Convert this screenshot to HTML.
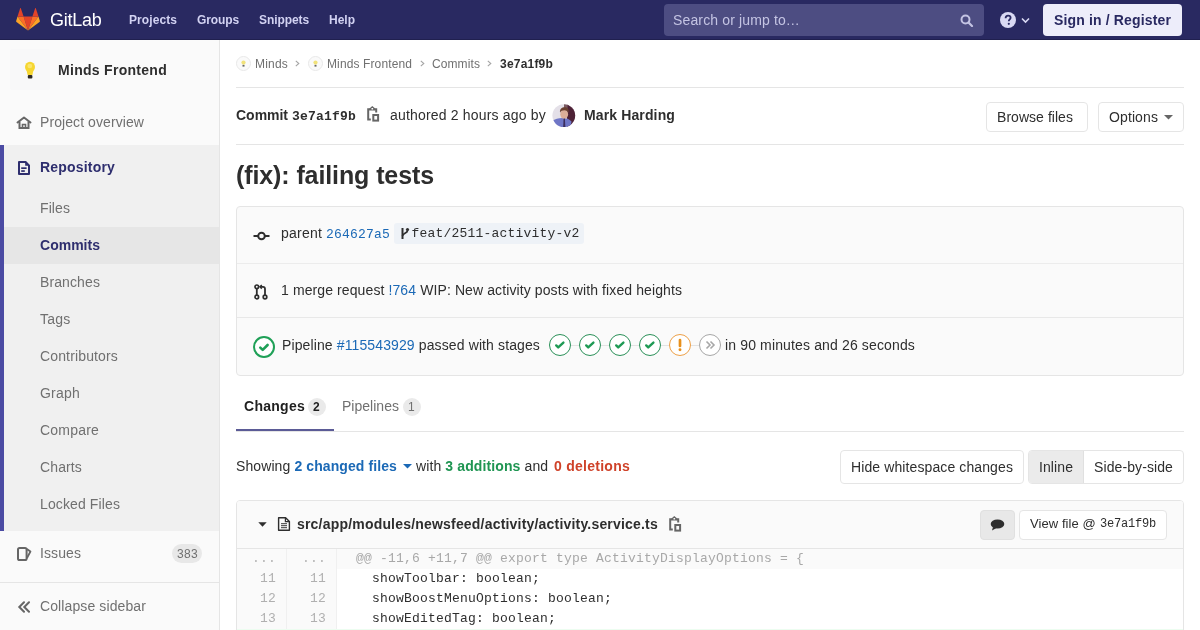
<!DOCTYPE html>
<html><head><meta charset="utf-8">
<style>
*{box-sizing:border-box;margin:0;padding:0}
html,body{width:1200px;height:630px;overflow:hidden;background:#fff}
body{font-family:"Liberation Sans",sans-serif;font-size:14px;color:#2e2e2e;position:relative}
.a{position:absolute;white-space:nowrap;line-height:1}
.m{font-family:"Liberation Mono",monospace}
.b{font-weight:bold}
.box{position:absolute}
/* navbar */
#nav{position:absolute;left:0;top:0;width:1200px;height:40px;background:#292961;border-bottom:1px solid #20204f}
.nt{font-weight:bold;font-size:12px;color:#d2d2f2;top:14px}
/* sidebar */
#side{position:absolute;left:0;top:40px;width:220px;height:590px;background:#fafafa;border-right:1px solid #e5e5e5}
.si{left:40px;font-size:14px;color:#707070}
.link{color:#1b69b6}
.hr{position:absolute;left:236px;width:948px;height:1px;background:#e5e5e5}
.btn{position:absolute;border:1px solid #e5e5e5;border-radius:4px;background:#fff}
.stage{position:absolute;top:334px;width:22px;height:22px;border-radius:50%;border:1px solid #2a9058;background:#fff}
.stage svg{position:absolute;left:0;top:0}
.ln{position:absolute;width:50px;text-align:right;font-family:"Liberation Mono",monospace;font-size:13px;letter-spacing:0.2px;line-height:1;color:#b0b0b0}
.code{position:absolute;left:356px;font-family:"Liberation Mono",monospace;font-size:13px;letter-spacing:0.2px;line-height:1;color:#2e2e2e;white-space:pre}
</style></head>
<body>
<div id="root" style="position:absolute;left:0;top:0;width:1200px;height:630px;will-change:transform;overflow:hidden">
<!-- ================= NAVBAR ================= -->
<div id="nav">
  <svg class="box" style="left:16px;top:8px" width="24" height="23" viewBox="0 0 24 23">
    <path d="M12 22.6 L16.4 8.4 H7.6 Z" fill="#e24329"/>
    <path d="M12 22.6 L7.6 8.4 H1.5 Z" fill="#fc6d26"/>
    <path d="M1.5 8.4 L0.1 12.9 C0 13.3 0.1 13.7 0.5 14 L12 22.6 Z" fill="#fca326"/>
    <path d="M1.5 8.4 H7.6 L4.9 0.4 C4.7 -0.1 4.3 -0.1 4.1 0.4 Z" fill="#e24329"/>
    <path d="M12 22.6 L16.4 8.4 H22.5 Z" fill="#fc6d26"/>
    <path d="M22.5 8.4 L23.9 12.9 C24 13.3 23.9 13.7 23.5 14 L12 22.6 Z" fill="#fca326"/>
    <path d="M22.5 8.4 H16.4 L19.1 0.4 C19.3 -0.1 19.7 -0.1 19.9 0.4 Z" fill="#e24329"/>
  </svg>
  <div class="a nols" style="left:50px;top:11px;font-size:18px;color:#fff;letter-spacing:-0.25px">GitLab</div>
  <div class="a nt" style="left:129px;letter-spacing:0.081px">Projects</div>
  <div class="a nt" style="left:197px;letter-spacing:-0.111px">Groups</div>
  <div class="a nt" style="left:259px;letter-spacing:-0.084px">Snippets</div>
  <div class="a nt" style="left:329px;letter-spacing:-0.001px">Help</div>
  <div class="box" style="left:664px;top:4px;width:320px;height:32px;border-radius:4px;background:#4d4d82"></div>
  <div class="a" style="left:673px;top:13px;font-size:14px;color:#c4c4e3;letter-spacing:0.139px">Search or jump to…</div>
  <svg class="box" style="left:960px;top:14px" width="14" height="13" viewBox="0 0 14 13">
    <circle cx="5.5" cy="5.5" r="4" fill="none" stroke="#c4c4e3" stroke-width="2"/>
    <path d="M8.5 8.5 L12 12" stroke="#c4c4e3" stroke-width="2.2" stroke-linecap="round"/>
  </svg>
  <svg class="box" style="left:1000px;top:12px" width="32" height="16" viewBox="0 0 32 16">
    <circle cx="8" cy="8" r="8" fill="#d9d9f3"/>
    <path d="M5.6 6.2 C5.6 4.6 6.7 3.6 8.1 3.6 C9.6 3.6 10.6 4.6 10.6 5.8 C10.6 7.4 8.8 7.5 8.8 9.2" fill="none" stroke="#292961" stroke-width="1.8"/>
    <circle cx="8.8" cy="11.8" r="1.1" fill="#292961"/>
    <path d="M22 6.5 L25.5 10 L29 6.5" fill="none" stroke="#d9d9f3" stroke-width="1.6"/>
  </svg>
  <div class="box" style="left:1043px;top:4px;width:139px;height:32px;border-radius:4px;background:#ededfa"></div>
  <div class="a b" style="left:1054px;top:13px;font-size:14px;color:#292961;letter-spacing:0.147px">Sign in / Register</div>
</div>

<!-- ================= SIDEBAR ================= -->
<div id="side"></div>
<div class="box" style="left:10px;top:49px;width:40px;height:41px;background:#f8f8f9;border-radius:3px"></div>
<svg class="box" style="left:23px;top:60px" width="14" height="20" viewBox="0 0 14 20">
  <ellipse cx="7" cy="7" rx="5" ry="5.2" fill="#f6d631"/>
  <path d="M3.6 10.5 L10.4 10.5 L9.4 15 L4.6 15 Z" fill="#f6d631"/>
  <ellipse cx="6.8" cy="6" rx="2.4" ry="2.2" fill="#fae56c"/>
  <rect x="4.8" y="15" width="4.6" height="3.6" rx="1" fill="#2e2a22"/>
</svg>
<div class="a b" style="left:58px;top:63px;font-size:14px;color:#2e2e2e;letter-spacing:0.287px">Minds Frontend</div>

<svg class="box" style="left:16px;top:116px" width="16" height="13" viewBox="0 0 16 13">
  <path d="M1.5 6.5 L8 1.5 L14.5 6.5" fill="none" stroke="#666" stroke-width="2" stroke-linejoin="round" stroke-linecap="round"/>
  <path d="M3.5 5.5 V12 H12.5 V5.5" fill="none" stroke="#666" stroke-width="2"/>
  <path d="M6.5 12 V8.5 H9.5 V12" fill="none" stroke="#666" stroke-width="1.6"/>
</svg>
<div class="a si" style="top:115px;letter-spacing:0.081px">Project overview</div>

<div class="box" style="left:0;top:145px;width:219px;height:386px;background:#f0f0f0"></div>
<div class="box" style="left:0;top:145px;width:4px;height:386px;background:#4b4ba3"></div>
<div class="box" style="left:4px;top:227px;width:215px;height:37px;background:#e6e6e6"></div>
<svg class="box" style="left:18px;top:161px" width="12" height="14" viewBox="0 0 12 14">
  <path d="M1 1 H7.6 L11 4.4 V13 H1 Z" fill="none" stroke="#2e2e6e" stroke-width="2" stroke-linejoin="round"/>
  <path d="M7.2 0.5 L11.5 4.8 H7.2 Z" fill="#2e2e6e"/>
  <rect x="3.2" y="6.3" width="5.4" height="1.7" fill="#2e2e6e"/>
  <rect x="3.2" y="9.2" width="3.6" height="1.7" fill="#2e2e6e"/>
</svg>
<div class="a si b" style="top:160px;color:#2e2e6e;letter-spacing:0.188px">Repository</div>
<div class="a si" style="top:201px;letter-spacing:0.088px">Files</div>
<div class="a si b" style="top:238px;color:#2e2e6e;letter-spacing:0.015px">Commits</div>
<div class="a si" style="top:275px;letter-spacing:0.107px">Branches</div>
<div class="a si" style="top:312px;letter-spacing:0.219px">Tags</div>
<div class="a si" style="top:349px;letter-spacing:0.145px">Contributors</div>
<div class="a si" style="top:386px;letter-spacing:0.218px">Graph</div>
<div class="a si" style="top:423px;letter-spacing:0.203px">Compare</div>
<div class="a si" style="top:460px;letter-spacing:0.128px">Charts</div>
<div class="a si" style="top:497px;letter-spacing:0.117px">Locked Files</div>

<svg class="box" style="left:17px;top:547px" width="15" height="14" viewBox="0 0 15 14">
  <rect x="1" y="1" width="8.6" height="12" rx="1.6" fill="none" stroke="#666" stroke-width="2"/>
  <path d="M9.8 2 L13.4 4.6 L9.8 11.2" fill="none" stroke="#666" stroke-width="1.9" stroke-linejoin="round"/>
</svg>
<div class="a si" style="top:546px;letter-spacing:0.090px">Issues</div>
<div class="box" style="left:172px;top:544px;width:30px;height:19px;border-radius:10px;background:#e8e8e8"></div>
<div class="a" style="left:177px;top:548px;font-size:12px;color:#707070;letter-spacing:0.326px">383</div>
<div class="box" style="left:0;top:582px;width:219px;height:1px;background:#e5e5e5"></div>
<svg class="box" style="left:17px;top:601px" width="14" height="12" viewBox="0 0 14 12">
  <path d="M7 1.3 L2.3 6 L7 10.7 M12 1.3 L7.3 6 L12 10.7" fill="none" stroke="#666" stroke-width="2" stroke-linecap="round"/>
</svg>
<div class="a si" style="top:599px;letter-spacing:0.107px">Collapse sidebar</div>

<!-- ================= BREADCRUMBS ================= -->
<svg class="box" style="left:236px;top:56px" width="15" height="15" viewBox="0 0 15 15">
  <circle cx="7.5" cy="7.5" r="7" fill="#fafafa" stroke="#e8e8e8" stroke-width="1"/>
  <circle cx="7.5" cy="6.6" r="2.1" fill="#f1e27a"/>
  <rect x="6.5" y="8.9" width="2" height="1.7" fill="#666"/>
</svg>
<div class="a" style="left:255px;top:58px;font-size:12px;color:#707070;letter-spacing:0.198px">Minds</div>
<svg class="box" style="left:295px;top:60px" width="5" height="7" viewBox="0 0 5 7"><path d="M0.8 0.8 L3.8 3.5 L0.8 6.2" fill="none" stroke="#a5a5a5" stroke-width="1.1"/></svg>
<svg class="box" style="left:308px;top:56px" width="15" height="15" viewBox="0 0 15 15">
  <circle cx="7.5" cy="7.5" r="7" fill="#fafafa" stroke="#e8e8e8" stroke-width="1"/>
  <circle cx="7.5" cy="6.6" r="2.1" fill="#f1e27a"/>
  <rect x="6.5" y="8.9" width="2" height="1.7" fill="#666"/>
</svg>
<div class="a" style="left:327px;top:58px;font-size:12px;color:#707070;letter-spacing:0.116px">Minds Frontend</div>
<svg class="box" style="left:420px;top:60px" width="5" height="7" viewBox="0 0 5 7"><path d="M0.8 0.8 L3.8 3.5 L0.8 6.2" fill="none" stroke="#a5a5a5" stroke-width="1.1"/></svg>
<div class="a" style="left:432px;top:58px;font-size:12px;color:#707070;letter-spacing:0.095px">Commits</div>
<svg class="box" style="left:487px;top:60px" width="5" height="7" viewBox="0 0 5 7"><path d="M0.8 0.8 L3.8 3.5 L0.8 6.2" fill="none" stroke="#a5a5a5" stroke-width="1.1"/></svg>
<div class="a b" style="left:500px;top:58px;font-size:12px;color:#2e2e2e;letter-spacing:0.204px">3e7a1f9b</div>
<div class="hr" style="top:87px"></div>

<!-- ================= COMMIT HEADER ================= -->
<div class="a b" style="left:236px;top:108px;font-size:14px;letter-spacing:-0.018px">Commit</div>
<div class="a m b" style="left:292px;top:110px;font-size:13px;letter-spacing:0.199px">3e7a1f9b</div>
<svg class="box" style="left:366px;top:106px" width="14" height="16" viewBox="0 0 14 16">
  <path d="M4 3.2 H2.2 V13.4 H4.8" fill="none" stroke="#666" stroke-width="2"/>
  <path d="M8.6 3.2 H10.2 V6.6" fill="none" stroke="#666" stroke-width="2"/>
  <path d="M3.4 4.6 V2.5 L6.3 0.1 L9.2 2.5 V4.6 Z" fill="#666"/>
  <rect x="5.5" y="2" width="1.6" height="1.5" fill="#fff"/>
  <rect x="7.3" y="9" width="4.8" height="5.6" fill="none" stroke="#666" stroke-width="2"/>
</svg>
<div class="a" style="left:390px;top:108px;font-size:14px;letter-spacing:0.184px">authored 2 hours ago by</div>
<svg class="box" style="left:552px;top:104px" width="24" height="24" viewBox="0 0 24 24">
  <defs><clipPath id="av"><circle cx="11.8" cy="11.6" r="11.4"/></clipPath></defs>
  <g clip-path="url(#av)">
    <rect width="24" height="24" fill="#e4e0e8"/>
    <path d="M15 0 H24 V24 H15 Z" fill="#4e2236"/>
    <path d="M12 0 H16 C15 4 15.5 8 16 12 H12 Z" fill="#7a5a62"/>
    <path d="M-1 24 V18 C2 15.5 6 14 10.5 14 C14.5 14 17.5 15 19.5 17.5 L18.5 24 Z" fill="#6f76c6"/>
    <ellipse cx="12.2" cy="10.2" rx="3.9" ry="4.7" fill="#dcae98"/>
    <path d="M8 8.8 C7.6 4.8 10 3.2 12.6 3.2 C15.6 3.2 17.2 5.2 16.6 9 C15.8 7 14.2 6.3 12.3 6.3 C10.4 6.3 9 7 8 8.8 Z" fill="#6a4030"/>
    <path d="M11.6 14.5 L12.9 14.5 L13.4 24 L11.1 24 Z" fill="#3c2e5e"/>
  </g>
</svg>
<div class="a b" style="left:584px;top:108px;font-size:14px;letter-spacing:0.128px">Mark Harding</div>

<div class="btn" style="left:986px;top:102px;width:102px;height:30px"></div>
<div class="a" style="left:997px;top:110px;font-size:14px;letter-spacing:0.044px">Browse files</div>
<div class="btn" style="left:1098px;top:102px;width:86px;height:30px"></div>
<div class="a" style="left:1109px;top:110px;font-size:14px;letter-spacing:0.107px">Options</div>
<svg class="box" style="left:1164px;top:115px" width="9" height="5" viewBox="0 0 9 5"><path d="M0 0 H9 L4.5 4.5 Z" fill="#666"/></svg>
<div class="hr" style="top:144px"></div>

<!-- ================= TITLE ================= -->
<div class="a b" style="left:236px;top:163px;font-size:25px;letter-spacing:-0.101px">(fix): failing tests</div>

<!-- ================= INFO WELL ================= -->
<div class="box" style="left:236px;top:206px;width:948px;height:170px;background:#fafafa;border:1px solid #e5e5e5;border-radius:4px"></div>
<div class="box" style="left:237px;top:263px;width:946px;height:1px;background:#ececec"></div>
<div class="box" style="left:237px;top:317px;width:946px;height:1px;background:#e8e8e8"></div>

<svg class="box" style="left:252.7px;top:229px" width="17" height="14" viewBox="0 0 17 14">
  <circle cx="8.5" cy="7" r="3.3" fill="none" stroke="#2e2e2e" stroke-width="2"/>
  <path d="M0.5 7 H5 M12 7 H16.5" stroke="#2e2e2e" stroke-width="2"/>
</svg>
<div class="a" style="left:281px;top:226px;font-size:14px;letter-spacing:0.217px">parent</div>
<div class="a m link" style="left:326px;top:228px;font-size:13px;letter-spacing:0.199px">264627a5</div>
<div class="box" style="left:394px;top:223px;width:190px;height:21px;background:#eef2f7;border-radius:3px"></div>
<svg class="box" style="left:400px;top:227px" width="10" height="13" viewBox="0 0 10 13">
  <path d="M2.5 1 V12" stroke="#2e2e2e" stroke-width="2"/>
  <circle cx="7.5" cy="2.5" r="1.6" fill="#2e2e2e"/>
  <path d="M7.5 3.5 C7.5 6.5 2.5 6 2.5 9" fill="none" stroke="#2e2e2e" stroke-width="1.8"/>
</svg>
<div class="a m" style="left:411.5px;top:227px;font-size:13px;letter-spacing:0.199px">feat/2511-activity-v2</div>

<svg class="box" style="left:254px;top:284px" width="14" height="16" viewBox="0 0 14 16">
  <circle cx="2.8" cy="2.8" r="1.8" fill="none" stroke="#2e2e2e" stroke-width="1.7"/>
  <circle cx="2.8" cy="13" r="1.8" fill="none" stroke="#2e2e2e" stroke-width="1.7"/>
  <circle cx="11" cy="13" r="1.8" fill="none" stroke="#2e2e2e" stroke-width="1.7"/>
  <path d="M2.8 4.6 V11.2" stroke="#2e2e2e" stroke-width="1.8"/>
  <path d="M11 11.2 V5 C11 3.6 10.3 2.8 9 2.8 H6.5" fill="none" stroke="#2e2e2e" stroke-width="1.8"/>
  <path d="M7.8 1 L6 2.8 L7.8 4.6" fill="none" stroke="#2e2e2e" stroke-width="1.5"/>
</svg>
<div class="a" style="left:281px;top:283px;font-size:14px;letter-spacing:0.103px">1 merge request <span class="link">!764</span> WIP: New activity posts with fixed heights</div>

<svg class="box" style="left:253px;top:336px" width="22" height="22" viewBox="0 0 22 22">
  <circle cx="11" cy="11" r="10" fill="#fff" stroke="#1fa057" stroke-width="2"/>
  <path d="M7.3 11.6 L9.7 13.9 L14.6 9" fill="none" stroke="#1fa057" stroke-width="2.6" stroke-linecap="round" stroke-linejoin="round"/>
</svg>
<div class="a" style="left:282px;top:338px;font-size:14px;letter-spacing:0.118px">Pipeline <span class="link">#115543929</span> passed with stages</div>

<div class="box" style="left:571px;top:345px;width:128px;height:1px;background:#e3e3e3"></div>
<div class="stage" style="left:549px"><svg width="20" height="20" viewBox="0 0 20 20"><path d="M6.2 10.4 L8.2 12.4 L13.4 7.6" fill="none" stroke="#1f9a55" stroke-width="2.4" stroke-linecap="round" stroke-linejoin="round"/></svg></div>
<div class="stage" style="left:579px"><svg width="20" height="20" viewBox="0 0 20 20"><path d="M6.2 10.4 L8.2 12.4 L13.4 7.6" fill="none" stroke="#1f9a55" stroke-width="2.4" stroke-linecap="round" stroke-linejoin="round"/></svg></div>
<div class="stage" style="left:609px"><svg width="20" height="20" viewBox="0 0 20 20"><path d="M6.2 10.4 L8.2 12.4 L13.4 7.6" fill="none" stroke="#1f9a55" stroke-width="2.4" stroke-linecap="round" stroke-linejoin="round"/></svg></div>
<div class="stage" style="left:639px"><svg width="20" height="20" viewBox="0 0 20 20"><path d="M6.2 10.4 L8.2 12.4 L13.4 7.6" fill="none" stroke="#1f9a55" stroke-width="2.4" stroke-linecap="round" stroke-linejoin="round"/></svg></div>
<div class="stage" style="left:669px;border-color:#eda048"><svg width="20" height="20" viewBox="0 0 20 20"><path d="M10 5 V11" stroke="#e8901c" stroke-width="2.7" stroke-linecap="round"/><circle cx="10" cy="14.8" r="1.45" fill="#e8901c"/></svg></div>
<div class="stage" style="left:699px;border-color:#a7a7a7"><svg width="20" height="20" viewBox="0 0 20 20"><path d="M6.5 6.5 L10 10 L6.5 13.5 M10.5 6.5 L14 10 L10.5 13.5" fill="none" stroke="#a7a7a7" stroke-width="1.6"/></svg></div>
<div class="a" style="left:725px;top:338px;font-size:14px;letter-spacing:0.142px">in 90 minutes and 26 seconds</div>

<!-- ================= TABS ================= -->
<div class="a b" style="left:244px;top:399px;font-size:14px;color:#1f1f1f;letter-spacing:0.268px">Changes</div>
<div class="box" style="left:308px;top:398px;width:18px;height:18px;border-radius:9px;background:#eaeaea"></div>
<div class="a b" style="left:313px;top:401px;font-size:12px;color:#1f1f1f;letter-spacing:0.326px">2</div>
<div class="a" style="left:342px;top:399px;font-size:14px;color:#707070;letter-spacing:0.021px">Pipelines</div>
<div class="box" style="left:403px;top:398px;width:18px;height:18px;border-radius:9px;background:#eaeaea"></div>
<div class="a" style="left:408px;top:401px;font-size:12px;color:#707070;letter-spacing:0.326px">1</div>
<div class="hr" style="top:431px"></div>
<div class="box" style="left:236px;top:429px;width:98px;height:2px;background:#5b5b96"></div>

<!-- ================= DIFF STATS ================= -->
<div class="a" style="left:236px;top:459px;font-size:14px;letter-spacing:0.097px">Showing <span class="b link">2 changed files</span></div>
<svg class="box" style="left:403px;top:464px" width="9" height="5" viewBox="0 0 9 5"><path d="M0 0 H9 L4.5 4.5 Z" fill="#1b69b6"/></svg>
<div class="a" style="left:416px;top:459px;font-size:14px;letter-spacing:0.112px">with <span class="b" style="color:#1f9552">3 additions</span> and</div>
<div class="a b" style="left:554px;top:459px;font-size:14px;color:#cf4229;letter-spacing:0.261px">0 deletions</div>

<div class="btn" style="left:840px;top:450px;width:184px;height:34px"></div>
<div class="a" style="left:851px;top:460px;font-size:14px;letter-spacing:0.107px">Hide whitespace changes</div>
<div class="btn" style="left:1028px;top:450px;width:156px;height:34px"></div>
<div class="box" style="left:1029px;top:451px;width:55px;height:32px;background:#ebebeb;border-right:1px solid #e0e0e0;border-radius:3px 0 0 3px"></div>
<div class="a" style="left:1039px;top:460px;font-size:14px;letter-spacing:0.089px">Inline</div>
<div class="a" style="left:1094px;top:460px;font-size:14px;letter-spacing:0.099px">Side-by-side</div>

<!-- ================= FILE ================= -->
<div class="box" style="left:236px;top:500px;width:948px;height:140px;border:1px solid #e5e5e5;border-radius:4px 4px 0 0;background:#fff"></div>
<div class="box" style="left:237px;top:501px;width:946px;height:47px;background:#fafafa;border-radius:3px 3px 0 0"></div>
<div class="box" style="left:237px;top:548px;width:946px;height:1px;background:#e5e5e5"></div>
<svg class="box" style="left:257.5px;top:521.5px" width="10" height="6" viewBox="0 0 10 6"><path d="M0.3 0.3 H8.7 L4.5 4.7 Z" fill="#2e2e2e"/></svg>
<svg class="box" style="left:277px;top:517px" width="14" height="15" viewBox="0 0 14 15">
  <path d="M1.6 0.8 H8.6 L12.4 4.6 V13.3 H1.6 Z" fill="none" stroke="#2e2e2e" stroke-width="1.4" stroke-linejoin="round"/>
  <path d="M8.4 0.8 V4.6 H12.4" fill="none" stroke="#2e2e2e" stroke-width="1.2"/>
  <path d="M4 6.7 H10 M4 8.7 H10 M4 10.7 H10" stroke="#2e2e2e" stroke-width="0.95"/>
</svg>
<div class="a b" style="left:297px;top:517px;font-size:14px;letter-spacing:0.194px">src/app/modules/newsfeed/activity/activity.service.ts</div>
<svg class="box" style="left:668px;top:516px" width="14" height="16" viewBox="0 0 14 16">
  <path d="M4 3.2 H2.2 V13.4 H4.8" fill="none" stroke="#666" stroke-width="2"/>
  <path d="M8.6 3.2 H10.2 V6.6" fill="none" stroke="#666" stroke-width="2"/>
  <path d="M3.4 4.6 V2.5 L6.3 0.1 L9.2 2.5 V4.6 Z" fill="#666"/>
  <rect x="5.5" y="2" width="1.6" height="1.5" fill="#fafafa"/>
  <rect x="7.3" y="9" width="4.8" height="5.6" fill="none" stroke="#666" stroke-width="2"/>
</svg>

<div class="box" style="left:980px;top:510px;width:35px;height:30px;border-radius:4px;background:#e8e8e8;border:1px solid #e0e0e0"></div>
<svg class="box" style="left:990px;top:519px" width="15" height="13" viewBox="0 0 15 13">
  <ellipse cx="7.5" cy="5" rx="6.8" ry="4.6" fill="#2e2e2e"/>
  <path d="M3 8 L2 11.5 L6.5 9 Z" fill="#2e2e2e"/>
</svg>
<div class="btn" style="left:1019px;top:510px;width:148px;height:30px"></div>
<div class="a" style="left:1030px;top:517px;font-size:13px;letter-spacing:0.071px">View file @</div>
<div class="a m" style="left:1100px;top:518px;font-size:12px;letter-spacing:-0.201px">3e7a1f9b</div>

<!-- diff table -->
<div class="box" style="left:237px;top:549px;width:100px;height:81px;background:#fafafa"></div>
<div class="box" style="left:286px;top:549px;width:1px;height:81px;background:#f0f0f0"></div>
<div class="box" style="left:336px;top:549px;width:1px;height:81px;background:#f0f0f0"></div>
<div class="box" style="left:337px;top:549px;width:846px;height:20px;background:#fafafa"></div>
<div class="ln" style="left:226px;top:552px;color:#b5b5b5">...</div>
<div class="ln" style="left:276px;top:552px;color:#b5b5b5">...</div>
<div class="code" style="top:552px;color:#a8a8a8">@@ -11,6 +11,7 @@ export type ActivityDisplayOptions = {</div>
<div class="ln" style="left:226px;top:572px">11</div>
<div class="ln" style="left:276px;top:572px">11</div>
<div class="code" style="top:572px">  showToolbar: boolean;</div>
<div class="ln" style="left:226px;top:592px">12</div>
<div class="ln" style="left:276px;top:592px">12</div>
<div class="code" style="top:592px">  showBoostMenuOptions: boolean;</div>
<div class="ln" style="left:226px;top:612px">13</div>
<div class="ln" style="left:276px;top:612px">13</div>
<div class="code" style="top:612px">  showEditedTag: boolean;</div>
<div class="box" style="left:237px;top:629px;width:946px;height:1px;background:#ecfdf0"></div>
</div>
</body></html>
